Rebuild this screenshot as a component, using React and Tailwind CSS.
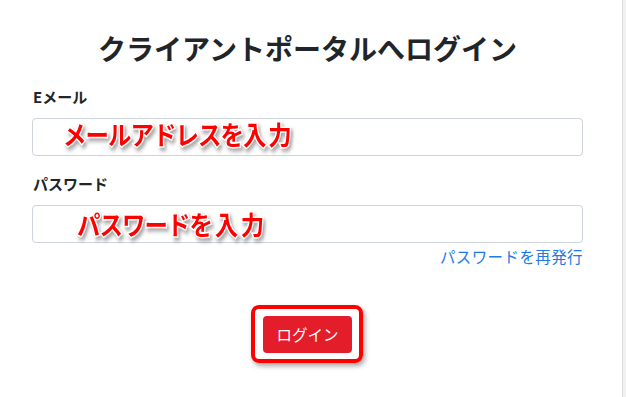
export default function App() {
  const jp = { fontFamily: '"Noto Sans CJK JP", "Noto Sans", sans-serif' };
  const annot =
    "absolute origin-left scale-x-[0.9] font-bold text-[#ff0000] text-[26px] leading-none tracking-[-1px] [-webkit-text-stroke:3px_#ffffff] [paint-order:stroke_fill] [filter:drop-shadow(2px_3px_2px_rgba(0,0,0,0.35))] whitespace-nowrap pointer-events-none";
  return (
    <div className="flex w-[626px] h-[397px] bg-[#f1f1f1] overflow-hidden" style={jp}>
      <div className="w-[623px] h-full bg-white border-r border-[#dcdcdc] pl-[32px] pr-[39px] pt-[30px] flex flex-col">
        <h1 className="text-[28px] font-bold text-[#212529] text-center leading-[36px]">
          クライアントポータルへログイン
        </h1>
        <label className="mt-[20px] text-[15px] font-bold text-[#212529] leading-[22px] pl-[1px]">Eメール</label>
        <div className="relative mt-[10px] h-[38px] rounded-[4px] border border-[#ced4da]">
          <span className={annot} style={{ left: 30, top: 2 }}>
            メールアドレスを入<span className="ml-[3px]">力</span>
          </span>
        </div>
        <label className="mt-[17px] text-[15px] font-bold text-[#212529] leading-[22px] pl-[1px]">パスワード</label>
        <div className="relative mt-[10px] h-[38px] rounded-[4px] border border-[#ced4da]">
          <span className={annot} style={{ left: 44, top: 5 }}>
            パスワードを<span className="ml-[3px]">入</span><span className="ml-[4px]">力</span>
          </span>
        </div>
        <div className="flex justify-end mt-[1px]">
          <a className="text-[15.5px] leading-[24px] text-[#1d7ae6] tracking-[0.4px]">パスワードを再発行</a>
        </div>
        <div className="flex justify-center mt-[48px]">
          <div className="relative">
            <span className="absolute left-[-12px] right-[-11px] top-[-11px] bottom-[-10px] rounded-[8px] border-[4px] border-[#ff0000] shadow-[2px_3px_5px_rgba(0,0,0,0.35)]"></span>
            <button className="relative w-[89px] h-[37px] rounded-[4px] bg-[#e41d2b] text-white text-[15.5px] leading-none">
              ログイン
            </button>
          </div>
        </div>
      </div>
    </div>
  );
}
